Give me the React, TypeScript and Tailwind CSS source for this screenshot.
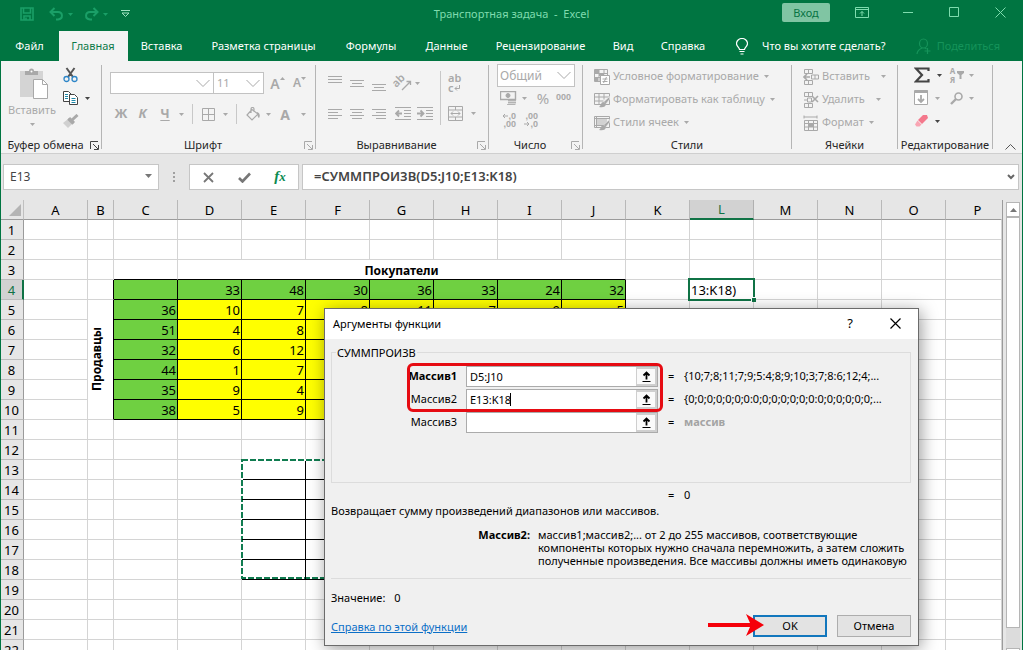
import type { ReactNode } from "react";

const tabs = [
  { label: "Файл", width: "w-[56px]" },
  { label: "Главная", width: "w-[69px]", active: true },
  { label: "Вставка", width: "w-[70px]" },
  { label: "Разметка страницы", width: "w-[134px]" },
  { label: "Формулы", width: "w-[81px]" },
  { label: "Данные", width: "w-[70px]" },
  { label: "Рецензирование", width: "w-[118px]" },
  { label: "Вид", width: "w-[47px]" },
  { label: "Справка", width: "w-[73px]" },
];

const columns = "ABCDEFGHIJKLMNOP".split("");
const rows = Array.from({ length: 22 }, (_, i) => i + 1);

// values of C4:J10, keyed by row
const data: Record<number, (number | string)[]> = {
  4: ["", 33, 48, 30, 36, 33, 24, 32],
  5: [36, 10, 7, 8, 11, 7, 9, 5],
  6: [51, 4, 8],
  7: [32, 6, 12],
  8: [44, 1, 7],
  9: [35, 9, 4],
  10: [38, 5, 9],
};

const args = [
  { id: "arg1", label: "Массив1", value: "D5:J10", result: "{10;7;8;11;7;9;5:4;8;9;10;3;7;8:6;12;4;...", bold: true },
  { id: "arg2", label: "Массив2", value: "E13:K18", result: "{0;0;0;0;0;0;0:0;0;0;0;0;0;0:0;0;0;0;0;0;...", bold: false },
  { id: "arg3", label: "Массив3", value: "", result: "массив", bold: false },
];

function Svg({ w = 16, h = 16, className = "", children }: { w?: number; h?: number; className?: string; children: ReactNode }) {
  return (
    <svg width={w} height={h} viewBox={`0 0 ${w} ${h}`} fill="none" stroke="currentColor" className={`shrink-0 ${className}`}>
      {children}
    </svg>
  );
}

function Caret({ className = "" }: { className?: string }) {
  return (
    <Svg w={5} h={3} className={className}>
      <path d="M0 0h5L2.5 3z" fill="currentColor" stroke="none" />
    </Svg>
  );
}

function Chevron({ className = "" }: { className?: string }) {
  return (
    <Svg w={14} h={9} className={className}>
      <path d="M.5 1 7 7.500 13.500 1" />
    </Svg>
  );
}

function Tool({ label, className, children }: { label: string; className: string; children: ReactNode }) {
  return (
    <button type="button" aria-label={label} className={`flex h-5 shrink-0 items-center justify-center ${className}`}>
      {children}
    </button>
  );
}

function Group({ title, className, launcher, dark, children }: { title: string; className: string; launcher?: boolean; dark?: boolean; children: ReactNode }) {
  return (
    <section className={`flex shrink-0 items-start pt-1 ${className}`}>
      <div className="flex h-[84px] w-full flex-col border-r border-[#b5b5b5] text-[#a9a9a9]">
        <div className="min-h-0 flex-1">{children}</div>
        <div className="flex h-2 items-center text-[#262626]">
          <span className="flex-1 whitespace-nowrap text-center">{title}</span>
          {launcher && (
            <button type="button" aria-label={`Параметры: ${title}`} className={`mr-[2px] ${dark ? "text-[#444]" : "text-[#a9a9a9]"}`}>
              <Svg w={9} h={9}>
                <path d="M.5 8V.5H8M3 3l5 5M8.500 4v4.500H4" />
              </Svg>
            </button>
          )}
        </div>
      </div>
    </section>
  );
}

function Lines({ widths, indent = false, right = false }: { widths: number[]; indent?: boolean; right?: boolean }) {
  return (
    <Svg w={16} h={widths.length * 3}>
      {widths.map((n, i) => {
        const x = indent ? (16 - n) / 2 : right ? 15 - n : 1;
        return <path key={i} d={`M${x} ${i * 3 + 1.5}h${n}`} />;
      })}
    </Svg>
  );
}

function ShiftIcon({ inward = false }: { inward?: boolean }) {
  return (
    <Svg w={16} h={14}>
      <path d="M0 .5h16M9 3.500h7M9 6.500h7M9 9.500h7M0 12.500h16" />
      <path d={inward ? "M0 6.500h6M3.500 3.500l3 3-3 3" : "M7 6.500H1M4 3.500l-3 3 3 3"} strokeWidth="1.8" />
    </Svg>
  );
}

function TableBrush({ shaded = false }: { shaded?: boolean }) {
  return (
    <Svg>
      {shaded ? (
        <>
          <path d="M.5 1.500h15v11H.5zM.5 3.500h15M2.500 1.500v11M.5 10.500h9" />
          <path d="M3 4h10v6H3z" fill="#d2d2d2" stroke="none" />
        </>
      ) : (
        <path d="M.5 1.500h15v11H.5zM.5 5h15M.5 9h9M5 1.500v11M10 1.500v6" />
      )}
      <path d="M15.500 4.500 9.500 10l2 2.500 4-5z" fill="#a9a9a9" stroke="#f3f3f3" strokeWidth=".6" />
      <path d="M9.500 10c-3 0-2 3.500-4.500 5 4 1 7-.5 7-3z" fill="#a9a9a9" stroke="none" />
    </Svg>
  );
}

function TitleBar() {
  return (
    <div className="flex h-[31px] items-start text-[#7fdcae]">
      <div className="flex h-7 flex-1 items-center text-[#1a9f67]">
        <button type="button" aria-label="Сохранить" className="ml-5">
          <Svg w={14} h={14}>
            <path d="M1 1h12v12H1zM3.500 1v5h7V1M4 13V9h6v4M6 10.500V13" strokeWidth="1.6" />
          </Svg>
        </button>
        <button type="button" aria-label="Отменить" className="ml-[15px] flex items-center gap-1">
          <Svg w={15} h={14}>
            <path d="M5.500 1 1.500 5l4 4M2 5h7c5 0 5.500 7 0 7.500H7" strokeWidth="2" />
          </Svg>
          <Caret />
        </button>
        <button type="button" aria-label="Вернуть" className="ml-[11px] flex items-center gap-1">
          <Svg w={15} h={14}>
            <path d="M9.500 1l4 4-4 4M13 5H6C1 5 .5 12 6 12.500h2" strokeWidth="2" />
          </Svg>
          <Caret />
        </button>
        <button type="button" aria-label="Настройка панели" className="ml-[13px] text-[#9fe3c2]">
          <Svg w={9} h={8}>
            <path d="M0 .5h9M1 3l3.500 3.500L8 3z" />
          </Svg>
        </button>
      </div>
      <h1 className="flex h-7 items-center whitespace-pre text-[11px]">{"Транспортная задача  -  Excel"}</h1>
      <div className="flex flex-1 justify-end">
        <button type="button" className="mt-[3px] mr-[9px] h-[19px] w-12 rounded-xs bg-[#80c5a3] text-[11px] leading-[19px] text-[#087443]">
          Вход
        </button>
        <Tool label="Параметры ленты" className="mt-[2px] w-[46px]">
          <Svg w={14} h={11}>
            <path d="M.5.5h13v10H.5zM.5 2.500h13M7 9V4.500M5 6.500l2-2 2 2" />
          </Svg>
        </Tool>
        <Tool label="Свернуть" className="mt-[2px] w-[46px]">
          <Svg w={10} h={10}>
            <path d="M0 5.500h10" />
          </Svg>
        </Tool>
        <Tool label="Развернуть" className="mt-[2px] w-[46px]">
          <Svg w={10} h={10}>
            <path d="M.5.5h9v9h-9z" />
          </Svg>
        </Tool>
        <Tool label="Закрыть" className="mt-[2px] w-[46px]">
          <Svg w={11} h={11}>
            <path d="M.5.5l10 10M10.500.5l-10 10" />
          </Svg>
        </Tool>
      </div>
    </div>
  );
}

function Tabs() {
  return (
    <nav className="flex h-[30px] items-stretch pl-[3px] text-[11px] text-white">
      {tabs.map((t) => (
        <button
          key={t.label}
          type="button"
          className={`shrink-0 whitespace-nowrap ${t.width} ${t.active ? "bg-[#f3f3f3] pr-px text-[#0b7a48]" : "pr-[3px]"}`}
        >
          {t.label}
        </button>
      ))}
      <button type="button" className="ml-[15px] flex shrink-0 items-center gap-[14px] whitespace-nowrap">
        <Svg w={12} h={17}>
          <path d="M3.500 11.500c0-2-3-3-3-6a5.500 5 0 0 1 11 0c0 3-3 4-3 6zM3.500 13.500h5M4.500 16h3" strokeWidth="1.2" />
        </Svg>
        Что вы хотите сделать?
      </button>
      <div className="flex-1" />
      <button type="button" className="mr-[23px] flex shrink-0 items-center gap-[5px] whitespace-nowrap text-[#15935a]">
        <Svg w={16} h={17}>
          <path d="M7.500 1a4 4.500 0 0 1 0 9 4 4.500 0 0 1 0-9zM1 16c.5-4 2.500-5 5-6M9 10l1.500 1M11.500 10v6M8.500 13h6" strokeWidth="1.2" />
        </Svg>
        Поделиться
      </button>
    </nav>
  );
}

function StyleButton({ icon, label, gap = "gap-[5px]" }: { icon: ReactNode; label: string; gap?: string }) {
  return (
    <button type="button" className="flex h-[23px] items-center whitespace-nowrap">
      {icon}
      <span className={`ml-[3px] flex items-center ${gap}`}>
        {label}
        <Caret />
      </span>
    </button>
  );
}

function CellsIcon({ kind }: { kind: "insert" | "delete" | "format" }) {
  if (kind === "format") {
    return (
      <Svg>
        <path d="M1 .5v3M14 .5v3M1 2h13M1.500 5.500h13v10h-13zM1.500 8.500h13M1.500 12h13M5.500 5.500v10M10.500 5.500v10" />
        <path d="M5 8h6v4H5z" fill="currentColor" stroke="none" />
      </Svg>
    );
  }
  return (
    <Svg>
      <path d="M1.500.5h8v4h-8zM5.500.5v4M1.500 11.500h8v4h-8zM5.500 11.500v4" />
      {kind === "insert" ? (
        <>
          <path d="M8.500 6h7v4h-7zM12 6v4" />
          <path d="M7 8H1M4 5 1 8l3 3" strokeWidth="1.6" />
        </>
      ) : (
        <>
          <path d="M4.500 6h4v4h-4zM1 8h3" />
          <path d="M9 4l6 6M15 4l-6 6" strokeWidth="1.6" />
        </>
      )}
    </Svg>
  );
}

function Ribbon() {
  return (
    <div className="flex h-[93px] items-start border-b border-[#cfcfcf] bg-[#f3f3f3] text-[11px]">
      <Group title="Буфер обмена" className="w-[101px]" launcher dark>
        <div className="flex">
          <button type="button" className="flex w-[62px] flex-col items-center pt-[3px] leading-4">
            <Svg w={30} h={31} className="mb-[3px] ml-[4px]">
              <path d="M1 3h23v26H1z" fill="#d4d4d4" stroke="none" />
              <path d="M6 7V3h4a2.500 2.500 0 0 1 5 0h4v4z" fill="#a9a9a9" stroke="none" />
              <circle cx="12.5" cy="3.500" r="1" fill="#fff" stroke="none" />
              <path d="M14.500 11.500h9l5 5v14h-14z" fill="#fff" />
              <path d="M23.500 11.500v5h5" />
            </Svg>
            Вставить
            <Caret className="mt-[5px]" />
          </button>
          <div className="flex flex-col">
            <Tool label="Вырезать" className="w-[15px]">
              <Svg w={15} h={16}>
                <path d="M3.500 1 10 10M11.500 1 5 10" stroke="#555" strokeWidth="2" />
                <circle cx="3.500" cy="12" r="2.500" stroke="#2e86c8" strokeWidth="1.3" />
                <circle cx="11.500" cy="12" r="2.500" stroke="#2e86c8" strokeWidth="1.3" />
              </Svg>
            </Tool>
            <div className="mt-[3px] flex items-center gap-[7px] text-[#444]">
              <Tool label="Копировать" className="w-[15px]">
                <Svg w={15} h={14}>
                  <path d="M6 10.500H.5V.5h5l3 3" fill="#fff" />
                  <path d="M6.500 3.500h5l3 3v7h-8z" fill="#fff" />
                  <path d="M2 3.500h3M2 5.500h3M2 7.500h3M8.500 7.500h4M8.500 9.500h4M8.500 11.500h4" stroke="#1e88a8" />
                </Svg>
              </Tool>
              <Caret />
            </div>
            <Tool label="Формат по образцу" className="mt-[3px] w-[15px]">
              <Svg w={16} h={15}>
                <path d="M14.500 1 9 6M6 4l5 5" strokeWidth="3" />
                <path d="M5 5 0 9l5 5 4-4z" fill="#d0d0d0" stroke="none" />
                <path d="M5 5l5 5" strokeWidth="2" />
              </Svg>
            </Tool>
          </div>
        </div>
      </Group>

      <Group title="Шрифт" className="w-[214px]" launcher>
        <div className="flex items-center pt-[7px] pl-2">
          <div className="flex h-[22px] w-[104px] items-center border border-[#c2c2c2] bg-white pr-[3px]">
            <input aria-label="Шрифт" className="min-w-0 flex-1 bg-transparent outline-none" defaultValue="" />
            <Chevron />
          </div>
          <div className="-ml-px flex h-[22px] w-[51px] items-center border border-[#c2c2c2] bg-white pr-[3px] pl-[3px]">
            <input aria-label="Размер шрифта" className="min-w-0 flex-1 bg-transparent outline-none" defaultValue="11" />
            <Chevron />
          </div>
          <Tool label="Увеличить размер" className="ml-[6px] w-[15px] text-[14px] font-semibold">
            A
            <Svg w={5} h={12}>
              <path d="M0 3h5L2.500 0z" fill="currentColor" stroke="none" />
            </Svg>
          </Tool>
          <Tool label="Уменьшить размер" className="ml-[7px] w-[15px] text-[12px] font-semibold">
            A
            <Svg w={5} h={12}>
              <path d="M0 0h5L2.500 3z" fill="currentColor" stroke="none" />
            </Svg>
          </Tool>
        </div>
        <div className="mt-[10px] flex items-center pl-2 text-[13px] font-bold">
          <Tool label="Полужирный" className="w-[22px]">Ж</Tool>
          <Tool label="Курсив" className="w-[21px] italic">К</Tool>
          <Tool label="Подчёркнутый" className="w-[24px] underline underline-offset-2">Ч</Tool>
          <Caret className="ml-[2px]" />
          <span className="ml-2 h-5 w-px bg-[#c8c8c8]" />
          <Tool label="Границы" className="ml-2 w-[14px]">
            <Svg w={13} h={13}>
              <path d="M.5.5h12v12H.5zM6.500.5v12M.5 6.500h12" />
            </Svg>
          </Tool>
          <Caret className="ml-2" />
          <span className="ml-2 h-5 w-px bg-[#c8c8c8]" />
          <Tool label="Цвет заливки" className="ml-[9px] w-4">
            <Svg w={16} h={15}>
              <path d="M6 2.500 1 8l5 5 6-6zM5 6V2a1.500 1.500 0 0 1 3 0v3" strokeWidth="1.2" />
              <path d="M11 5c3 1 3.500 4 2 6-1 0-1.500-3-2-4z" fill="currentColor" stroke="none" />
            </Svg>
          </Tool>
          <Caret className="ml-1" />
          <Tool label="Цвет шрифта" className="ml-[6px] w-[16px] text-[14px]">A</Tool>
          <Caret className="ml-2" />
        </div>
      </Group>

      <Group title="Выравнивание" className="w-[173px]" launcher>
        <div className="flex">
          <div className="pl-[11px]">
            <div className="flex h-[38px] items-start pt-1">
              <Tool label="По верхнему краю" className="w-[22px] justify-start">
                <Lines widths={[14, 14, 14]} />
              </Tool>
              <Tool label="По середине" className="mt-1 w-[22px] justify-start">
                <Lines widths={[14, 10, 14]} indent />
              </Tool>
              <Tool label="По нижнему краю" className="mt-2 w-[24px] justify-start">
                <Lines widths={[14, 10, 14]} indent />
              </Tool>
              <Tool label="Ориентация" className="mt-1 w-[18px]">
                <Svg w={18} h={18} className="overflow-visible">
                  <text x="2" y="16" transform="rotate(-45 2 16)" dx="1" dy="-2" fill="currentColor" stroke="none" fontSize="11" fontWeight="600">ab</text>
                  <path d="M7 16l8-8M11.500 7.500H15.500V11" strokeWidth="1.3" />
                </Svg>
              </Tool>
              <Caret className="mt-[13px] ml-[2px]" />
            </div>
            <div className="mt-px flex">
              <Tool label="По левому краю" className="w-[22px] justify-start">
                <Lines widths={[14, 10, 14, 10]} />
              </Tool>
              <Tool label="По центру" className="w-[22px] justify-start">
                <Lines widths={[14, 10, 14, 10]} indent />
              </Tool>
              <Tool label="По правому краю" className="w-[24px] justify-start">
                <Lines widths={[14, 10, 14, 10]} right />
              </Tool>
              <Tool label="Уменьшить отступ" className="w-[22px] justify-start">
                <ShiftIcon />
              </Tool>
              <Tool label="Увеличить отступ" className="w-4">
                <ShiftIcon inward />
              </Tool>
            </div>
          </div>
          <span className="mt-[6px] ml-[7px] h-[54px] w-px bg-[#c8c8c8]" />
          <div className="pl-[7px]">
            <button type="button" aria-label="Перенести текст" className="mt-2 block w-4 text-left text-[11px] leading-[10px] font-semibold">
              ab
              <span className="flex items-center">
                c
                <Svg w={6} h={6}>
                  <path d="M5.500 0v3.500H1M3 1.500l-2 2 2 2" />
                </Svg>
              </span>
            </button>
            <div className="mt-[10px] flex items-center">
              <Tool label="Объединить" className="w-[15px]">
                <Svg w={15} h={15}>
                  <path d="M.5.5h14v14H.5zM.5 4h14M.5 11h14M7.500.5V4M7.500 11v3.500M3 7.500h9M5 5.500l-2 2 2 2M10 5.500l2 2-2 2" />
                </Svg>
              </Tool>
              <Caret className="ml-2" />
            </div>
          </div>
        </div>
      </Group>

      <Group title="Число" className="w-[94px]" launcher>
        <div className="flex flex-col pl-2">
          <div className="-mt-px flex h-[23px] w-[78px] items-center border border-[#c2c2c2] bg-white pr-[3px] pl-[2px]">
            <select aria-label="Числовой формат" className="min-w-0 flex-1 appearance-none bg-transparent text-[12px]">
              <option>Общий</option>
            </select>
            <Chevron />
          </div>
          <div className="mt-px flex items-center pl-[3px]">
            <Tool label="Финансовый формат" className="w-[17px]">
              <Svg w={17} h={15}>
                <path d="M.5.500h15v8H.5z" strokeWidth="1.4" />
                <circle cx="8" cy="4.500" r="2" fill="currentColor" />
                <path d="M8 9h8v5H8z" fill="#d6d6d6" stroke="none" />
                <path d="M8 9.500h8M8 11.500h8M7 13.500h8" strokeWidth=".8" />
              </Svg>
            </Tool>
            <Caret className="ml-[5px]" />
            <Tool label="Процентный формат" className="ml-[7px] w-[18px] text-[15px]">%</Tool>
            <Tool label="Формат с разделителями" className="ml-[2px] w-[19px] font-['Liberation_Sans',sans-serif] text-[9px] font-bold">000</Tool>
          </div>
          <div className="mt-[4px] flex gap-[6px] pl-[3px] font-['Liberation_Sans',sans-serif] text-[9px] leading-[8px] font-bold">
            <button type="button" aria-label="Увеличить разрядность" className="w-4 text-right">
              <span className="flex items-center justify-end">
                <Svg w={6} h={6}>
                  <path d="M6 3H1M3 1 1 3l2 2" />
                </Svg>
                ,0
              </span>
              ,00
            </button>
            <button type="button" aria-label="Уменьшить разрядность" className="w-4 text-right">
              ,00
              <span className="flex items-center justify-end">
                <Svg w={6} h={6}>
                  <path d="M0 3h5M3 1l2 2-2 2" />
                </Svg>
                ,0
              </span>
            </button>
          </div>
        </div>
      </Group>

      <Group title="Стили" className="w-[209px]">
        <div className="flex flex-col items-start pl-[11px]">
          <StyleButton
            label="Условное форматирование"
            icon={
              <Svg>
                <path d="M.5.5h13v12H.5zM.5 4.500h13M.5 8.500h6M5 .5v12M10 .5v5" />
                <path d="M1 1h4v4H1zM5 4h5v3H5zM1 9h3v3H1z" fill="currentColor" stroke="none" />
                <path d="M6.500 6.500h9v9h-9z" fill="#fff" />
                <path d="M8.500 10h5M8.500 12.500h5M12.500 8l-3 6" />
              </Svg>
            }
          />
          <StyleButton label="Форматировать как таблицу" icon={<TableBrush />} />
          <StyleButton label="Стили ячеек" icon={<TableBrush shaded />} />
        </div>
      </Group>

      <Group title="Ячейки" className="w-[106px]">
        <div className="flex flex-col items-start pl-[11px]">
          <StyleButton label="Вставить" gap="gap-[11px]" icon={<CellsIcon kind="insert" />} />
          <StyleButton label="Удалить" gap="gap-[11px]" icon={<CellsIcon kind="delete" />} />
          <StyleButton label="Формат" icon={<CellsIcon kind="format" />} />
        </div>
      </Group>

      <Group title="Редактирование" className="w-[95px]">
        <div className="-mt-px grid grid-cols-[35px_auto] pl-4">
          <div className="flex h-[22px] items-center gap-[7px] text-[#444]">
            <Tool label="Сумма" className="w-4">
              <Svg>
                <path d="M14.500 4V1.500H2L8 8l-6 6.500h12.500V12" strokeWidth="2.2" />
              </Svg>
            </Tool>
            <Caret />
          </div>
          <div className="flex items-center">
            <Tool label="Сортировка и фильтр" className="w-4 gap-[2px]">
              <span className="text-[8px] leading-[9px] font-bold">
                А<br />Я
              </span>
              <Svg w={7} h={8}>
                <path d="M0 0h7v2L4.500 4v4h-2V4L0 2z" fill="currentColor" stroke="none" />
              </Svg>
            </Tool>
            <Caret className="ml-1" />
          </div>
          <div className="flex h-6 items-center gap-[6px]">
            <Tool label="Заполнить" className="w-[15px]">
              <Svg w={15} h={16}>
                <path d="M.5.5h13v14H.5zM1 2.500h12" fill="#fff" />
                <path d="M1 1.500h12.500" strokeWidth="3" />
                <path d="M7 5v7M4 9l3 3 3-3" strokeWidth="1.8" />
              </Svg>
            </Tool>
            <Caret />
          </div>
          <div className="flex items-center">
            <Tool label="Найти и выделить" className="w-4">
              <Svg w={14} h={13}>
                <circle cx="8.500" cy="4.500" r="3.500" strokeWidth="1.6" />
                <path d="M6 7l-5 5" strokeWidth="2.4" />
              </Svg>
            </Tool>
            <Caret className="ml-1" />
          </div>
          <div className="flex h-[22px] items-center gap-[6px] text-[#444]">
            <Tool label="Очистить" className="w-[15px]">
              <Svg w={15} h={14}>
                <path d="M9 1h4l1 3-6 6-4-4z" fill="#f4788c" stroke="none" />
                <path d="M3.500 6.500l4 4-2 2h-3l-1.500-2z" fill="#f9a5b3" stroke="none" />
              </Svg>
            </Tool>
            <Caret />
          </div>
        </div>
      </Group>

      <button type="button" aria-label="Свернуть ленту" className="mt-[83px] ml-3 text-[#555]">
        <Svg w={11} h={6}>
          <path d="M.5 5.500l5-5 5 5" />
        </Svg>
      </button>
    </div>
  );
}

function FormulaBar() {
  return (
    <div className="flex h-[46px] items-start pt-[10px] pr-[3px] pl-[2px] text-[12px] text-[#444]">
      <div className="flex h-[26px] w-[156px] shrink-0 items-center border border-[#c6c6c6] bg-white pr-[6px] pl-[6px]">
        <input aria-label="Имя" className="min-w-0 flex-1 bg-transparent outline-none" defaultValue="E13" />
        <Svg w={7} h={4} className="mb-[2px] text-[#777]">
          <path d="M0 0h7L3.500 4z" fill="currentColor" stroke="none" />
        </Svg>
      </div>
      <div className="flex h-[26px] w-[30px] shrink-0 items-center justify-center text-[#a0a0a0]">
        <Svg w={2} h={10}>
          <path d="M1 0v2M1 4v2M1 8v2" strokeWidth="2" />
        </Svg>
      </div>
      <div className="flex h-[26px] w-[110px] shrink-0 items-center border border-[#c6c6c6] bg-white text-[#777]">
        <Tool label="Отмена ввода" className="w-9">
          <Svg w={11} h={11}>
            <path d="M1 1l9 9M10 1l-9 9" strokeWidth="1.8" />
          </Svg>
        </Tool>
        <Tool label="Ввод" className="w-9">
          <Svg w={13} h={11}>
            <path d="M1 6l3.500 3.500L12 1.500" strokeWidth="2.600" />
          </Svg>
        </Tool>
        <Tool label="Вставить функцию" className="w-9 pb-px text-[15px] font-bold text-[#0b8a50] italic">
          <span className="font-['Liberation_Serif',serif]">
            f<span className="text-[13px]">x</span>
          </span>
        </Tool>
      </div>
      <div className="ml-[3px] flex h-[26px] flex-1 items-center border border-[#c6c6c6] bg-white pr-[3px] pl-[11px]">
        <input
          aria-label="Строка формул"
          className="min-w-0 flex-1 bg-transparent text-[13px] font-semibold outline-none"
          defaultValue="=СУММПРОИЗВ(D5:J10;E13:K18)"
        />
        <Svg w={8} h={6} className="text-[#666]">
          <path d="M1 1l3 3 3-3" strokeWidth="2" />
        </Svg>
      </div>
    </div>
  );
}

function Cell({ col, row }: { col: string; row: number }) {
  const c = columns.indexOf(col);
  const inTable = c >= 2 && c <= 9;
  const inRange = c >= 4 && c <= 10 && row >= 13 && row <= 18;
  const values = data[row];

  if (values && inTable) {
    const green = row === 4 || col === "C";
    return (
      <td className={`border-r border-b border-black pt-[2px] pr-px text-right ${green ? "bg-[#6fd041]" : "bg-[#ffff00]"}`}>
        {values[c - 2]}
      </td>
    );
  }
  if (inRange) {
    return (
      <td className="relative border-r border-b border-black">
        {col === "E" && row === 13 && (
          <svg width="450" height="122" className="pointer-events-none absolute -top-px -left-px max-w-none text-[#107c50]">
            <rect x="1" y="1" width="447" height="118" fill="none" stroke="#fff" strokeWidth="2" />
            <rect x="1" y="1" width="447" height="118" fill="none" stroke="currentColor" strokeWidth="2" strokeDasharray="6 2" />
          </svg>
        )}
      </td>
    );
  }
  if (col === "L" && row === 4) {
    return (
      <td className="relative border-r border-b border-[#d4d4d4] pt-[2px] pl-px">
        13:K18)
        <span className="absolute -inset-[2px] border-2 border-[#107346]" />
        <span className="absolute -right-[3px] -bottom-[3px] h-[5px] w-[5px] border-t border-l border-white bg-[#107346]" />
      </td>
    );
  }
  const blackRight = col === "B" && row === 4;
  const blackBottom = inTable && row === 3;
  return (
    <td
      className={`border-r border-b ${blackRight ? "border-r-black" : "border-r-[#d4d4d4]"} ${blackBottom ? "border-b-black" : "border-b-[#d4d4d4]"}`}
    />
  );
}

function Sheet() {
  return (
    <div className="flex min-h-0 flex-1 overflow-hidden">
      <div className="min-w-0 flex-1 overflow-hidden border-r border-[#9b9b9b] bg-white">
        <table className="w-full table-fixed border-separate border-spacing-0 text-[13px] leading-[17px] text-black">
          <colgroup>
            <col className="w-[23px]" />
            {columns.map((c) => (
              <col key={c} className={c === "B" ? "w-[26px]" : c === "P" ? "w-auto" : "w-16"} />
            ))}
          </colgroup>
          <thead>
            <tr className="h-5 bg-[#e6e6e6]">
              <th className="border-r border-b border-r-[#c0c0c0] border-b-[#9b9b9b]">
                <Svg w={12} h={12} className="mr-[2px] ml-auto text-[#b4b4b4]">
                  <path d="M12 0v12H0z" fill="currentColor" stroke="none" />
                </Svg>
              </th>
              {columns.map((c) => (
                <th
                  key={c}
                  className={`border-r font-normal ${
                    c === "L"
                      ? "border-b-2 border-r-[#b0b0b0] border-b-[#107346] bg-[#d2d2d2] pt-px text-[#107346]"
                      : c === "P"
                        ? "border-b border-r-transparent border-b-[#9b9b9b] pt-[2px] pl-2"
                        : "border-b border-r-[#b8b8b8] border-b-[#9b9b9b] pt-[2px]"
                  }`}
                >
                  {c}
                </th>
              ))}
            </tr>
          </thead>
          <tbody>
            {rows.map((r) => (
              <tr key={r} className="h-5">
                <th
                  className={`border-b border-b-[#bcbcbc] pt-[2px] font-normal ${
                    r === 4 ? "border-r-2 border-r-[#107346] bg-[#d2d2d2] text-[#107346]" : "border-r border-r-[#9b9b9b] bg-[#e6e6e6] pr-px"
                  }`}
                >
                  {r}
                </th>
                {columns.map((c) => {
                  const i = columns.indexOf(c);
                  if (r === 3 && i >= 3 && i <= 9) {
                    return c === "D" ? (
                      <td key={c} colSpan={7} className="border-r border-b border-r-[#d4d4d4] border-b-black pt-[2px] text-center text-[12px] font-bold">
                        Покупатели
                      </td>
                    ) : null;
                  }
                  if (c === "B" && r >= 5 && r <= 10) {
                    return r === 5 ? (
                      <td key={c} rowSpan={6} className="border-r border-b border-r-black border-b-[#d4d4d4] text-[12px] font-bold">
                        <span className="mx-auto block w-[17px] rotate-180 text-center [writing-mode:vertical-rl]">Продавцы</span>
                      </td>
                    ) : null;
                  }
                  return <Cell key={c} col={c} row={r} />;
                })}
              </tr>
            ))}
          </tbody>
        </table>
      </div>
      <div className="flex w-[19px] shrink-0 flex-col pt-[2px] pr-[2px] pl-[3px]">
        <button type="button" aria-label="Вверх" className="flex h-[15px] shrink-0 items-center justify-center border border-[#b5b5b5] bg-white text-[#777]">
          <Svg w={7} h={4}>
            <path d="M0 4h7L3.500 0z" fill="currentColor" stroke="none" />
          </Svg>
        </button>
        <div className="flex-1 border border-[#b5b5b5] bg-white" />
        <div className="h-5 shrink-0 bg-[#dcdcdc]" />
        <div className="h-[2px] shrink-0 border border-b-0 border-[#b5b5b5] bg-white" />
      </div>
    </div>
  );
}

function FunctionDialog() {
  return (
    <div
      role="dialog"
      aria-label="Аргументы функции"
      className="absolute top-[308px] left-[324px] w-[595px] border border-[#6b6b6b] bg-[#f0f0f0] text-[11px] leading-[13px] text-black shadow-[2px_3px_16px_rgba(0,0,0,0.4)]"
    >
      <div className="flex h-[30px] items-center bg-white pr-px pb-[2px] pl-2">
        <h2 className="flex-1">Аргументы функции</h2>
        <button type="button" aria-label="Справка" className="w-[46px] text-[13px]">?</button>
        <button type="button" aria-label="Закрыть" className="flex w-[44px] justify-center">
          <Svg w={11} h={11}>
            <path d="M.5.5l10 10M10.500.5l-10 10" strokeWidth="1.2" />
          </Svg>
        </button>
      </div>
      <div className="pt-[7px] pr-[7px] pb-2 pl-[6px]">
        <fieldset className="h-[137px] border border-[#dcdcdc]">
          <legend className="ml-[4px] px-px">СУММПРОИЗВ</legend>
          <div className="relative flex flex-col gap-[2px] pt-[7px]">
            {args.map((a) => (
              <div key={a.id} className="flex h-[21px] items-center">
                <label htmlFor={a.id} className={`w-[125px] pb-[2px] text-right ${a.bold ? "font-bold" : ""}`}>
                  {a.label}
                </label>
                <div className="ml-[9px] flex h-[21px] w-[192px] border border-[#ababab] bg-white">
                  <div className="flex min-w-0 flex-1 items-center pl-[3px]">
                    <input
                      id={a.id}
                      defaultValue={a.value}
                      className={`bg-transparent outline-none ${a.id === "arg2" ? "w-10" : "min-w-0 flex-1"}`}
                    />
                    {a.id === "arg2" && <span className="h-[13px] w-px bg-black" />}
                  </div>
                  <button type="button" aria-label={`Свернуть ${a.label}`} className="flex w-[21px] items-center justify-center border-2 border-l border-[#cfcfcf] bg-[#fafafa]">
                    <Svg w={9} h={11}>
                      <path d="M4.500 8.500V1.500M1.500 4.500l3-3 3 3" strokeWidth="1.8" />
                      <path d="M.5 10.500h8" />
                    </Svg>
                  </button>
                </div>
                <span className="ml-[10px] w-4 pb-[2px]">=</span>
                <span className={`pb-[2px] ${a.value ? "" : "font-bold text-[#a3a3a3]"}`}>{a.result}</span>
              </div>
            ))}
            <span className="pointer-events-none absolute top-[4px] left-[75px] h-[49px] w-[256px] rounded-md border-[3px] border-[#e60b12]" />
          </div>
        </fieldset>
        <p className="mt-[5px] flex pl-[337px]">
          <span className="w-4">=</span>0
        </p>
        <p className="mt-[3px]">Возвращает сумму произведений диапазонов или массивов.</p>
        <div className="mt-[11px] flex border-b border-[#dcdcdc] pb-[11px]">
          <span className="w-[199px] shrink-0 text-right font-bold">Массив2:</span>
          <p className="ml-2 whitespace-nowrap">
            массив1;массив2;... от 2 до 255 массивов, соответствующие
            <br />
            компоненты которых нужно сначала перемножить, а затем сложить
            <br />
            полученные произведения. Все массивы должны иметь одинаковую
          </p>
        </div>
        <p className="mt-3 flex gap-[9px]">
          <span>Значение:</span>
          <span>0</span>
        </p>
        <div className="mt-[11px] flex h-[22px] items-center gap-[10px]">
          <a href="#help" className="mr-auto text-[#0b6fc7] underline">
            Справка по этой функции
          </a>
          <button type="button" className="relative h-[22px] w-[74px] border-2 border-[#1277bd] bg-[#e3e3e3] pb-px">
            OK
            <svg width="56" height="24" viewBox="0 0 56 24" fill="#f5000a" className="pointer-events-none absolute -top-1 -left-[47px] max-w-none">
              <path d="M0 10h42L38 1l18 11-18 11 4-9H0z" />
            </svg>
          </button>
          <button type="button" className="h-[22px] w-[74px] border border-[#adadad] bg-[#e3e3e3] pb-px">
            Отмена
          </button>
        </div>
      </div>
    </div>
  );
}

export default function App() {
  return (
    <div className="relative flex h-screen flex-col overflow-hidden bg-[#007541] font-['Noto_Sans','Open_Sans',sans-serif]">
      <TitleBar />
      <Tabs />
      <main className="flex min-h-0 flex-1 flex-col border-r border-l border-[#007541] bg-[#e6e6e6]">
        <Ribbon />
        <FormulaBar />
        <Sheet />
      </main>
      <FunctionDialog />
    </div>
  );
}
